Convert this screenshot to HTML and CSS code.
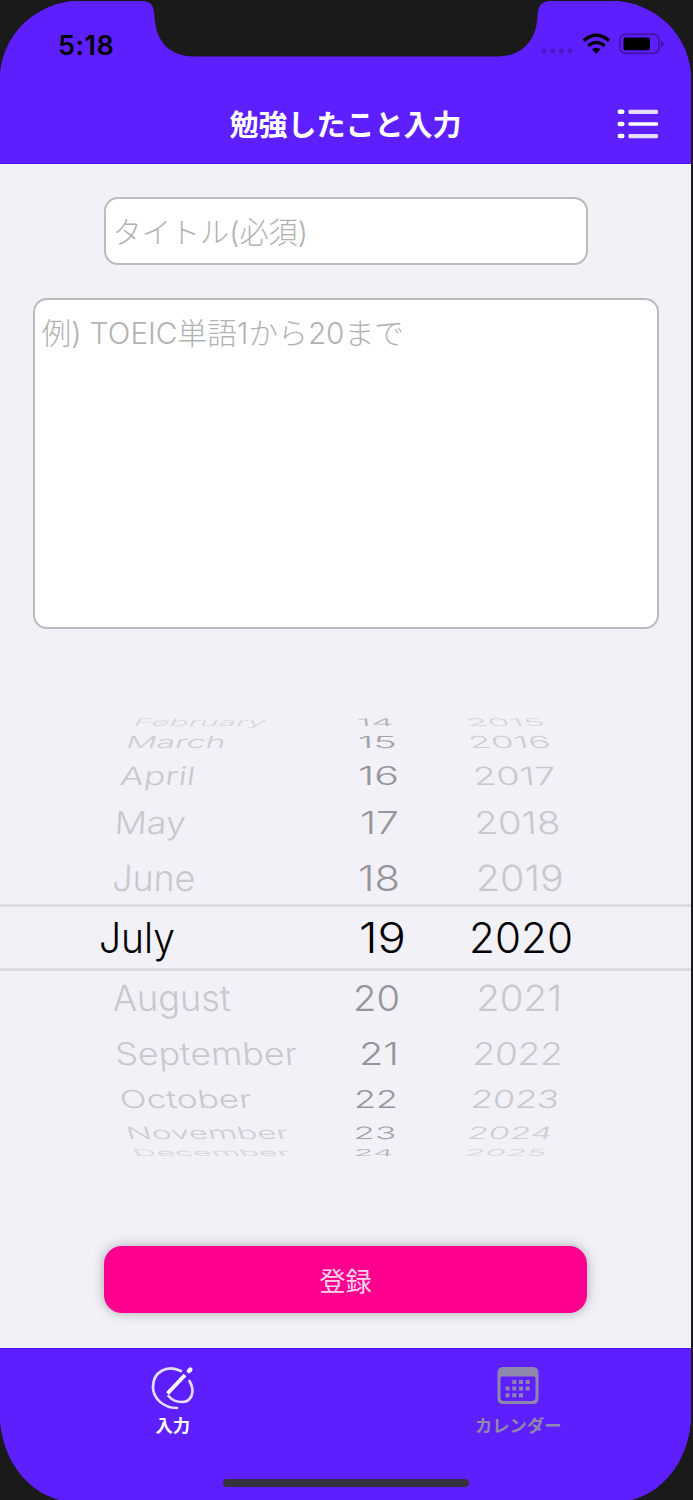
FILE: index.html
```html
<!DOCTYPE html>
<html lang="ja">
<head>
<meta charset="utf-8">
<title>勉強したこと入力</title>
<link rel="stylesheet" href="styles.css">
</head>
<body>
<div class="phone">
  <svg class="notch" viewBox="0 0 403 57" width="403" height="57"><path d="M0 0V1.500C7 2 9 7 9.500 17C11 42 25 56.500 49 56.500H352C376 56.500 391 42 392.500 17C393 7 395 2 403 1.500V0Z" fill="#1a1a1a"/></svg>
  <header class="top">
    <div class="status">
      <span class="time">5:18</span>
      <svg class="status-icons" width="124" height="24" viewBox="0 0 124 24">
        <g fill="#4a19c4"><circle cx="4" cy="18" r="2.500"/><circle cx="12.700" cy="18" r="2.500"/><circle cx="21.300" cy="18" r="2.500"/><circle cx="30" cy="18" r="2.500"/></g>
        <g fill="none" stroke="#000" stroke-width="3.300"><path d="M43.700 7.700Q56.300-3.300 69 7.700"/><path d="M48.200 12.700Q56.300 6 64.500 12.700"/></g>
        <path d="M52 16.300Q56.300 13 60.600 16.300L56.300 20.800Z"/>
        <rect x="80" y="1.300" width="39" height="19" rx="5.500" fill="none" stroke="#3d14a6" stroke-width="1.700"/>
        <rect x="83.500" y="4.600" width="26.500" height="12.600" rx="2"/>
        <path d="M121 7.500Q124 9.500 124 11T121 14.500Z" fill="#3d14a6"/>
      </svg>
    </div>
    <div class="nav">
      <h1 class="nav-title">勉強したこと入力</h1>
      <svg class="list-icon" width="43" height="32" viewBox="0 0 43 32"><g fill="#fff"><rect x="1.500" y="1.500" width="7" height="4.600" rx="2.300"/><rect x="1.500" y="13.700" width="7" height="4.600" rx="2.300"/><rect x="1.500" y="25.700" width="7" height="4.600" rx="2.300"/></g><g fill="#e4dbff"><rect x="12.500" y="1.700" width="29.500" height="4.200" rx="1"/><rect x="12.500" y="14.200" width="29.500" height="3.600" rx="1" fill="#fff"/><rect x="12.500" y="26" width="29.500" height="4.200" rx="1"/></g></svg>
    </div>
  </header>
  <main class="content">
    <div class="field title-field">タイトル(必須)</div>
    <div class="field memo-field">例) TOEIC単語1から20まで</div>
    <svg class="picker" width="691" height="444" viewBox="0 714 691 444">
      <path d="M0 905.500H691M0 969.700H691" stroke="#d9d9de" stroke-width="2.700"/>
      <g class="months">
        <text class="edge" transform="matrix(1 0 -.17 .29 132 725.500)" textLength="132" lengthAdjust="spacingAndGlyphs">February</text>
        <text class="far" transform="matrix(1 0 -.14 .46 125 748)" textLength="99" lengthAdjust="spacingAndGlyphs">March</text>
        <text transform="matrix(1 0 -.1 .7 119 785)" textLength="75" lengthAdjust="spacingAndGlyphs">April</text>
        <text transform="matrix(1 0 -.06 .87 114 833.500)" textLength="71" lengthAdjust="spacingAndGlyphs">May</text>
        <text transform="matrix(1 0 -.03 1 112 890.500)" textLength="83" lengthAdjust="spacingAndGlyphs">June</text>
        <text class="current" x="99" y="952.500" textLength="76" lengthAdjust="spacingAndGlyphs">July</text>
        <text transform="matrix(1 0 .03 1 113 1011)" textLength="118" lengthAdjust="spacingAndGlyphs">August</text>
        <text transform="matrix(1 0 .06 .87 116 1064.500)" textLength="182" lengthAdjust="spacingAndGlyphs">September</text>
        <text transform="matrix(1 0 .1 .69 121 1108)" textLength="132" lengthAdjust="spacingAndGlyphs">October</text>
        <text class="far" transform="matrix(1 0 .14 .47 128 1139)" textLength="162" lengthAdjust="spacingAndGlyphs">November</text>
        <text class="edge" transform="matrix(1 0 .17 .26 135 1155.500)" textLength="156" lengthAdjust="spacingAndGlyphs">December</text>
      </g>
      <g class="days">
        <text class="edge" transform="matrix(1 0 .03 .29 357 725.500)" textLength="37" lengthAdjust="spacingAndGlyphs">14</text>
        <text class="far" transform="matrix(1 0 .02 .46 358 748)" textLength="39" lengthAdjust="spacingAndGlyphs">15</text>
        <text transform="matrix(1 0 0 .7 358 785)" textLength="41" lengthAdjust="spacingAndGlyphs">16</text>
        <text transform="matrix(1 0 0 .87 360 833.500)" textLength="39" lengthAdjust="spacingAndGlyphs">17</text>
        <text transform="matrix(1 0 0 1 358 890.500)" textLength="42" lengthAdjust="spacingAndGlyphs">18</text>
        <text class="current" x="359" y="952.500" textLength="47" lengthAdjust="spacingAndGlyphs">19</text>
        <text transform="matrix(1 0 0 1 353 1011)" textLength="47" lengthAdjust="spacingAndGlyphs">20</text>
        <text transform="matrix(1 0 0 .87 359 1064.500)" textLength="40" lengthAdjust="spacingAndGlyphs">21</text>
        <text transform="matrix(1 0 0 .69 354 1108)" textLength="44" lengthAdjust="spacingAndGlyphs">22</text>
        <text class="far" transform="matrix(1 0 -.02 .47 353 1139)" textLength="43" lengthAdjust="spacingAndGlyphs">23</text>
        <text class="edge" transform="matrix(1 0 -.03 .26 353 1155.500)" textLength="40" lengthAdjust="spacingAndGlyphs">24</text>
      </g>
      <g class="years">
        <text class="edge" transform="matrix(1 0 .14 .29 468 725.500)" textLength="78" lengthAdjust="spacingAndGlyphs">2015</text>
        <text class="far" transform="matrix(1 0 .12 .46 470 748)" textLength="82" lengthAdjust="spacingAndGlyphs">2016</text>
        <text transform="matrix(1 0 .08 .7 474 785)" textLength="83" lengthAdjust="spacingAndGlyphs">2017</text>
        <text transform="matrix(1 0 .05 .87 475 833.500)" textLength="86" lengthAdjust="spacingAndGlyphs">2018</text>
        <text transform="matrix(1 0 .02 1 476 890.500)" textLength="88" lengthAdjust="spacingAndGlyphs">2019</text>
        <text class="current" x="469" y="952.500" textLength="104" lengthAdjust="spacingAndGlyphs">2020</text>
        <text transform="matrix(1 0 -.02 1 476 1011)" textLength="86" lengthAdjust="spacingAndGlyphs">2021</text>
        <text transform="matrix(1 0 -.05 .87 472 1064.500)" textLength="90" lengthAdjust="spacingAndGlyphs">2022</text>
        <text transform="matrix(1 0 -.08 .69 470 1108)" textLength="88" lengthAdjust="spacingAndGlyphs">2023</text>
        <text class="far" transform="matrix(1 0 -.12 .47 466 1139)" textLength="85" lengthAdjust="spacingAndGlyphs">2024</text>
        <text class="edge" transform="matrix(1 0 -.14 .26 463 1155.500)" textLength="82" lengthAdjust="spacingAndGlyphs">2025</text>
      </g>
    </svg>
    <button class="submit" type="button">登録</button>
  </main>
  <footer class="tabs">
    <div class="tab active">
      <svg width="46" height="44" viewBox="0 0 46 44" fill="none" stroke="#e4dcff" stroke-width="2.700" stroke-linecap="round"><path d="M31 5C17-2 3 6 3 21C3 32 13 42 27 42"/><path d="M39.500 15C46 26 41 36 32 36C26 36 21 33 18.500 30"/><path d="M17.500 27.500L35 9" stroke="#fff" stroke-width="4" stroke-linecap="butt"/><path d="M39 5L40.300 3.700" stroke="#fff" stroke-width="4.500"/></svg>
      <span class="tab-label">入力</span>
    </div>
    <div class="tab">
      <svg width="46" height="44" viewBox="0 0 46 44"><path fill="#8f87ab" fill-rule="evenodd" d="M8 1H38Q43.500 1 43.500 7V32Q43.500 38 38 38H8Q2.500 38 2.500 32V7Q2.500 1 8 1ZM7 10.500Q5.500 10.500 5.500 12V31Q5.500 35 9 35H37Q40.500 35 40.500 31V12Q40.500 10.500 39 10.500Z"/><path stroke="#8f87ab" stroke-width="4" stroke-dasharray="4 2.700" d="M17.300 16H35M10.600 22.500H35M10.600 29.300H28.500"/></svg>
      <span class="tab-label">カレンダー</span>
    </div>
    <div class="home-indicator"></div>
  </footer>
</div>
</body>
</html>
```
FILE: styles.css
```css
* { box-sizing: border-box; }
body {
  margin: 0;
  height: 1500px;
  overflow: hidden;
  background: #1a1a1a;
  font-family: Inter, "Noto Sans CJK JP", sans-serif;
}
.phone {
  position: relative;
  width: 691px;
  height: 1501px;
  margin-top: 1px;
  display: flex;
  flex-direction: column;
  overflow: hidden;
  border-radius: 80px 80px 76px 76px / 78px 78px 88px 88px;
  background: #5e1fff;
}
.notch { position: absolute; left: 145px; top: -1px; }
.top {
  height: 163px;
  flex: none;
  background: #5e1fff;
  border-bottom: 1px solid #5010ef;
}
.status {
  height: 84px;
  padding: 28px 27px 0 58px;
  display: flex;
  justify-content: space-between;
  align-items: flex-start;
}
.time {
  font-size: 27px;
  line-height: 34px;
  font-weight: 600;
  letter-spacing: .5px;
  color: #000;
}
.status-icons { margin-top: 4px; }
.nav {
  height: 78px;
  padding: 0 32px 0 75px;
  display: grid;
  grid-template-columns: 1fr 43px;
  align-items: center;
}
.nav-title {
  margin: 3px 0 0;
  text-align: center;
  font-size: 29px;
  line-height: 40px;
  font-weight: 700;
  color: #fff;
}
.content {
  height: 1184px;
  flex: none;
  padding-top: 33px;
  display: flex;
  flex-direction: column;
  align-items: center;
  background: #f2f1f7;
}
.field {
  background: #fff;
  border: 2px solid #bbbbbd;
  color: #b2b2b4;
  line-height: 40px;
  font-weight: 300;
}
.title-field {
  width: 484px;
  height: 68px;
  padding: 14px 7px;
  border-radius: 14px;
  font-size: 29.200px;
}
.memo-field {
  width: 626px;
  height: 331px;
  margin-top: 33px;
  padding: 13px 7px;
  border-radius: 14px;
  font-size: 29.700px;
}
.picker {
  display: block;
  margin-top: 85px;
  font-family: Inter, sans-serif;
  font-size: 36px;
  font-weight: 300;
}
.months, .years { fill: #c9c8ce; }
.days { fill: #96959b; }
.edge { opacity: .65; }
.far { opacity: .85; }
.current { fill: #000; font-size: 42px; }
.submit {
  width: 483px;
  height: 67px;
  margin-top: 88px;
  border: 0;
  border-radius: 18px;
  background: #ff008e;
  box-shadow: 0 0 12px rgba(60, 60, 70, .4);
  color: #ffd2eb;
  font: 400 26px/40px "Noto Sans CJK JP", sans-serif;
}
.tabs {
  flex: 1;
  display: grid;
  grid-template: 133px auto / 1fr 1fr;
  background: #5e1fff;
  border-top: 1px solid #5010ef;
}
.tab {
  padding-top: 17px;
  display: flex;
  flex-direction: column;
  align-items: center;
  color: #8f87ab;
}
.tab.active { color: #fff; }
.tab-label {
  font-size: 17.300px;
  line-height: 26px;
  font-weight: 700;
  margin-top: 3px;
}
.home-indicator {
  grid-column: 1 / 3;
  justify-self: center;
  margin-top: -3px;
  width: 246px;
  height: 8px;
  border-radius: 4px;
  background: #35323b;
}
```
